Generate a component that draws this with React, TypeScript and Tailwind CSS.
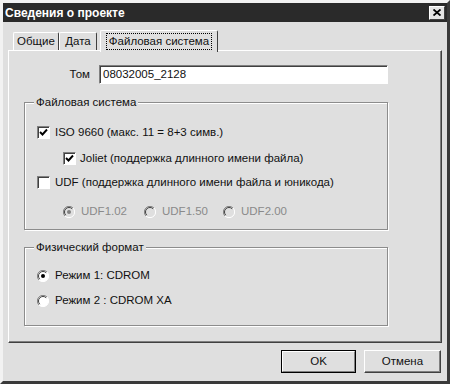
import React from "react";

const face = "bg-[#dfdfdf]";

function CheckBox({ checked }: { checked?: boolean }) {
  return (
    <span className="flex h-[13px] w-[13px] shrink-0 items-center justify-center border border-t-[#808080] border-l-[#808080] border-r-white border-b-white bg-white shadow-[inset_1px_1px_0_#404040]">
      {checked && (
        <svg width="9" height="9" viewBox="0 0 9 9">
          <path d="M1 4 L3.5 6.5 L8 1.5" fill="none" stroke="#000" strokeWidth="1.9" />
        </svg>
      )}
    </span>
  );
}

function Radio({ checked, disabled }: { checked?: boolean; disabled?: boolean }) {
  return (
    <svg width="12" height="12" viewBox="0 0 12 12" className="shrink-0">
      <circle cx="6" cy="6" r="5.5" fill={disabled ? "#dfdfdf" : "#fff"} />
      <path d="M10 2 A5.5 5.5 0 0 0 2 10" fill="none" stroke="#808080" strokeWidth="1" />
      <path d="M9.2 2.8 A4.5 4.5 0 0 0 2.8 9.2" fill="none" stroke="#404040" strokeWidth="1" />
      <path d="M2 10 A5.5 5.5 0 0 0 10 2" fill="none" stroke="#fff" strokeWidth="1" />
      {checked && <circle cx="6" cy="6" r="2" fill={disabled ? "#808080" : "#000"} />}
    </svg>
  );
}

function Group({ title, className, children }: { title: string; className: string; children: React.ReactNode }) {
  return (
    <div className={`relative ml-[15px] w-[364px] border border-[#8c8c8c] pl-[12px] shadow-[inset_1px_1px_0_#fff,1px_1px_0_#fff] ${className}`}>
      <span className={`absolute -top-[7px] left-[9px] px-[2px] leading-[13px] ${face}`}>{title}</span>
      {children}
    </div>
  );
}

export default function App() {
  return (
    <div className={`h-[384px] w-[450px] border-[3px] border-t-[#f2f2f2] border-l-[#f2f2f2] border-r-[#3a3a3a] border-b-[#3a3a3a] ${face} font-['Liberation_Sans',Arial,sans-serif] text-[11.5px] text-[#111]`}>
      {/* Заголовок */}
      <div className="flex h-[19px] items-center justify-between bg-[#2a2a2a] pl-[2px] pr-[2px]">
        <span className="text-[12px] font-bold text-white">Сведения о проекте</span>
        <span className="flex h-[14px] w-[16px] items-center justify-center border border-t-white border-l-white border-r-[#404040] border-b-[#404040] bg-[#e4e4e4]">
          <svg width="8" height="7" viewBox="0 0 8 7">
            <path d="M0.5 0.5 L7.5 6.5 M7.5 0.5 L0.5 6.5" stroke="#000" strokeWidth="1.8" />
          </svg>
        </span>
      </div>

      <div className="mt-[8px] px-[5px]">
        {/* Вкладки */}
        <div className="flex h-[20px] items-end pl-[5px]">
          <div className="flex h-[18px] w-[46px] items-center justify-center rounded-t-[2px] border-l border-t border-r border-l-white border-t-white border-r-[#404040]">
            Общие
          </div>
          <div className="flex h-[18px] w-[38px] items-center justify-center rounded-t-[2px] border-l border-t border-r border-l-white border-t-white border-r-[#404040]">
            Дата
          </div>
          <div className={`relative z-10 -mb-[2px] ml-[3px] flex h-[22px] w-[118px] items-start justify-center rounded-t-[2px] border-l border-t border-r border-l-white border-t-white border-r-[#404040] pt-[2px] ${face}`}>
            <span className="border border-dotted border-black px-[2px] leading-[15px]">Файловая система</span>
          </div>
        </div>

        {/* Панель */}
        <div className="h-[293px] border border-t-white border-l-white border-r-[#404040] border-b-[#404040] shadow-[inset_-1px_-1px_0_#808080]">
          <div className="mt-[14px] flex h-[19px] items-center">
            <span className="w-[81px] text-right">Том</span>
            <div className="ml-[9px] flex h-[19px] w-[289px] items-center border border-t-[#808080] border-l-[#808080] border-r-white border-b-white bg-white pl-[3px] shadow-[inset_1px_1px_0_#404040]">
              08032005_2128
            </div>
          </div>

          <Group title="Файловая система" className="mt-[18px] h-[128px] pt-[23px]">
            <label className="flex h-[13px] items-center gap-[5px]">
              <CheckBox checked />
              <span>ISO 9660 (макс. 11 = 8+3 симв.)</span>
            </label>
            <label className="ml-[26px] mt-[13px] flex h-[13px] items-center gap-[4px]">
              <CheckBox checked />
              <span>Joliet (поддержка длинного имени файла)</span>
            </label>
            <label className="mt-[11px] flex h-[13px] items-center gap-[5px]">
              <CheckBox />
              <span>UDF (поддержка длинного имени файла и юникода)</span>
            </label>
            <div className="ml-[26px] mt-[16px] flex h-[13px] items-center text-[#8a8a8a]">
              <span className="flex w-[81px] items-center gap-[6px]">
                <Radio checked disabled />
                UDF1.02
              </span>
              <span className="flex w-[79px] items-center gap-[6px]">
                <Radio disabled />
                UDF1.50
              </span>
              <span className="flex items-center gap-[6px]">
                <Radio disabled />
                UDF2.00
              </span>
            </div>
          </Group>

          <Group title="Физический формат" className="mt-[17px] h-[79px] pt-[21px]">
            <label className="flex h-[13px] items-center gap-[6px]">
              <Radio checked />
              <span>Режим 1: CDROM</span>
            </label>
            <label className="mt-[12px] flex h-[13px] items-center gap-[6px]">
              <Radio />
              <span>Режим 2 : CDROM XA</span>
            </label>
          </Group>
        </div>

        {/* Кнопки */}
        <div className="mt-[7px] flex justify-end gap-[8px] pr-[1px]">
          <button className="h-[23px] w-[75px] border border-black">
            <span className="flex h-full w-full items-center justify-center border border-t-white border-l-white border-r-[#808080] border-b-[#808080]">
              OK
            </span>
          </button>
          <button className="flex h-[23px] w-[77px] items-center justify-center border border-t-white border-l-white border-r-[#404040] border-b-[#404040] shadow-[inset_-1px_-1px_0_#808080]">
            Отмена
          </button>
        </div>
      </div>
    </div>
  );
}
